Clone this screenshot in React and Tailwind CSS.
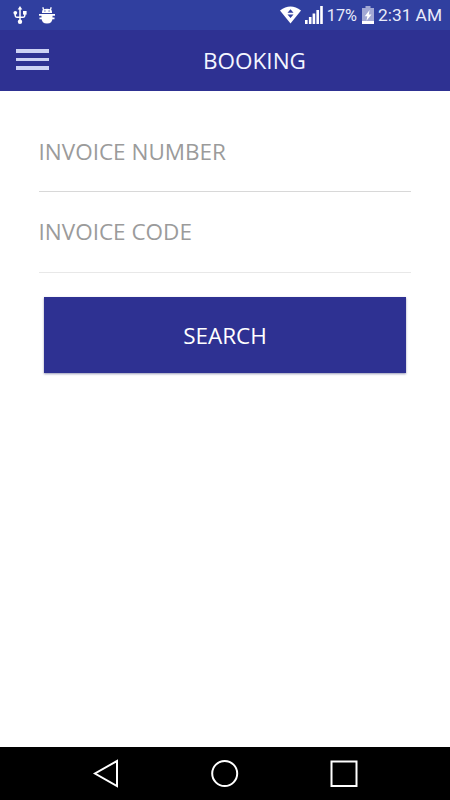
function UsbIcon() {
  return (
    <svg width="14" height="20" viewBox="0 0 14 20" fill="none" stroke="#fff" strokeWidth="1.5">
      <path d="M7 3v14M2.200 8v2.600q0 1.600 1.600 1.600h6.400q1.600 0 1.600-1.600V8" />
      <path d="M7 1l2.300 3.600H4.700z" fill="#fff" stroke="none" />
      <circle cx="2.300" cy="7.800" r="1.900" fill="#fff" stroke="none" />
      <path d="M10 6h3.600v3.600H10z" fill="#fff" stroke="none" />
      <circle cx="7" cy="16.700" r="2.200" fill="#fff" stroke="none" />
    </svg>
  );
}

function BugIcon() {
  return (
    <svg width="18" height="18" viewBox="0 0 18 18" fill="none" stroke="#fff">
      <path d="M4 7V5.400Q4.300 2.700 9 2.700t5 2.700V7z" fill="#fff" stroke="none" />
      <path d="M3.500 7.900h11v4Q14.500 17.500 9 17.500t-5.500-5.600z" fill="#fff" stroke="none" />
      <path d="M5.600 4L4.800 1.200M12.400 4l.8-2.800" strokeWidth="1.300" />
      <path d="M1 8.800h16M1.500 12.400h15" strokeWidth="1.800" />
      <path d="M6.300 4.600h1.200v1H6.300zM10.500 4.600h1.200v1h-1.200z" fill="#303f9f" stroke="none" />
    </svg>
  );
}

function WifiIcon() {
  return (
    <svg width="21" height="18" viewBox="0 0 21 18">
      <path d="M0 4.500Q10.500-3.300 21 4.500L10.500 17.500z" fill="#fff" />
      <path d="M10.500 3.300l3 3.400h-6zM10.500 12l3-3.400h-6z" fill="#303f9f" />
    </svg>
  );
}

function SignalIcon() {
  return (
    <svg width="18" height="18" viewBox="0 0 18 18" fill="#fff">
      <path d="M0 14h2.600v4H0zM3.900 11h2.600v7H3.900zM7.600 7.500h2.600V18H7.600zM11.400 4H14v14h-2.600zM15.200 0h2.600v18h-2.600z" />
    </svg>
  );
}

function BatteryIcon() {
  return (
    <svg width="12" height="18" viewBox="0 0 12 18">
      <path d="M3.500 0h5v2H12v16H0V2h3.500z" fill="#a2a8d4" />
      <path d="M0 15h12v3H0z" fill="#fff" />
      <path d="M7.600 4L2.800 10.200h2.500l-.8 4.500 5-6.200H6.800z" fill="#fff" />
    </svg>
  );
}

function Field({ label, className }) {
  return (
    <div className={`flex items-center border-b text-[22.500px] text-[#9b9b9b] ${className}`}>
      <span className="-ml-[0.500px] whitespace-nowrap">{label}</span>
    </div>
  );
}

export default function App() {
  return (
    <div className="flex h-[800px] w-[450px] flex-col overflow-hidden bg-white font-['Open_Sans',sans-serif]">
      <div className="flex h-[30px] shrink-0 items-center justify-between bg-[#303f9f] pr-[8px] pl-[13px] font-[Roboto,sans-serif] text-[#e8ebfa]">
        <div className="flex items-center gap-[11px]">
          <UsbIcon />
          <BugIcon />
        </div>
        <div className="flex items-center">
          <WifiIcon />
          <span className="ml-[4px]"><SignalIcon /></span>
          <span className="ml-[4px] pt-[2px] text-[16.300px]">17%</span>
          <span className="ml-[5px]"><BatteryIcon /></span>
          <span className="ml-[4px] pt-[2px] text-[17.300px] whitespace-nowrap">2:31 AM</span>
        </div>
      </div>
      <header className="grid h-[61px] shrink-0 grid-cols-[60px_1fr] items-center bg-[#2e3192]">
        <div className="ml-[16px] flex w-[33px] flex-col gap-[5px] pb-[2px]">
          <span className="h-[3.500px] bg-[#cdd2f4]" />
          <span className="h-[3.500px] bg-[#cdd2f4]" />
          <span className="h-[3.500px] bg-[#cdd2f4]" />
        </div>
        <h1 className="pr-px text-center text-[22.500px] text-[#f4f6ff]">BOOKING</h1>
      </header>
      <main className="flex-1 px-[39px] pt-[21px]">
        <Field label="INVOICE NUMBER" className="h-[80px] border-[#d8d8d8]" />
        <Field label="INVOICE CODE" className="h-[81px] border-[#e8e8e8]" />
        <button className="mx-[5px] mt-[24px] block h-[76px] w-[362px] bg-[#2e3192] pt-px text-[22.500px] text-white shadow-[0_1px_2px_rgba(46,49,110,0.5)]">
          SEARCH
        </button>
      </main>
      <nav className="h-[53px] shrink-0 bg-black">
        <svg width="450" height="53" viewBox="0 0 450 53" fill="none" stroke="#fff" strokeWidth="2">
          <path d="M117 14v25L95 26.500z" />
          <circle cx="224.700" cy="26.500" r="12.500" />
          <path d="M331.500 14.500h25v24.500h-25z" />
        </svg>
      </nav>
    </div>
  );
}
